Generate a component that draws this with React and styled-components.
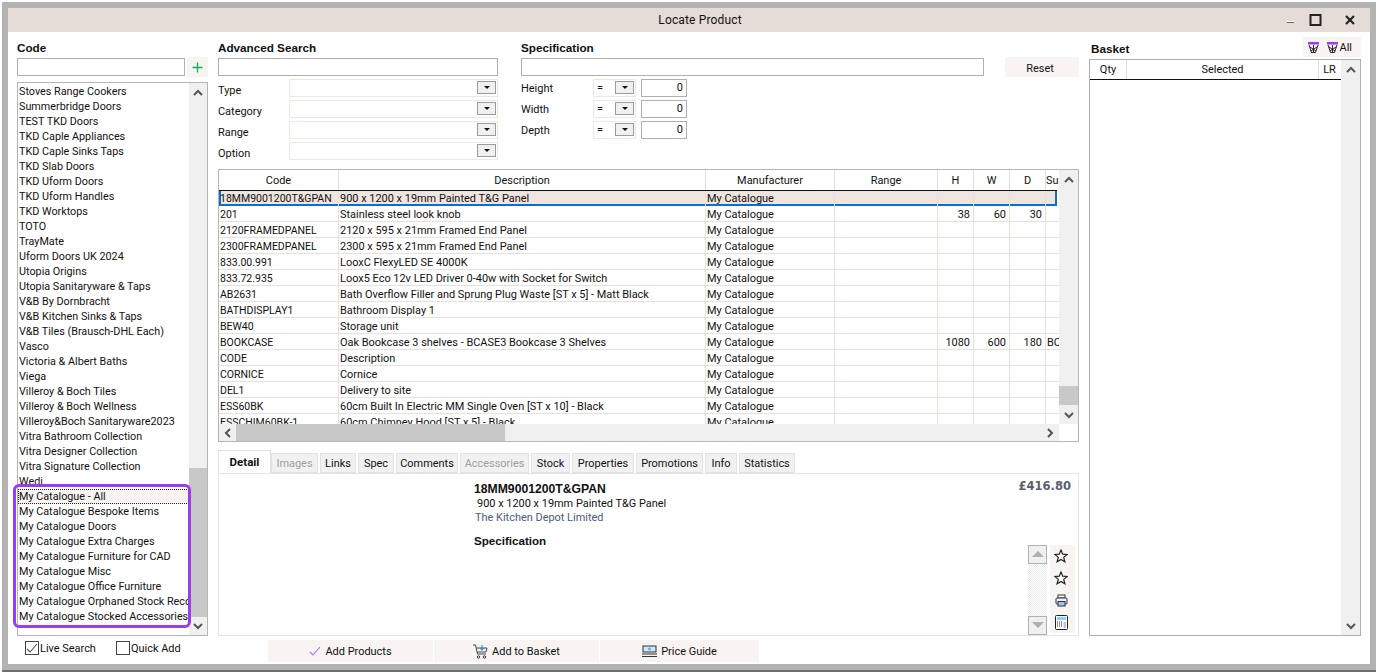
import React from "react";
import styled, { createGlobalStyle } from "styled-components";

const Global = createGlobalStyle`
  html, body { margin: 0; padding: 0; background: #fff; }
  body { font-family: Roboto, "Liberation Sans", Arial, sans-serif; font-size: 10.95px; color: #111; }
  * { box-sizing: border-box; }
`;

const Page = styled.div`
  width: 1378px; height: 672px; padding: 2px 2px 0; background: #fff; overflow: hidden;
`;
const Win = styled.div`
  width: 1374px; height: 668px; border: 6px solid #b3b3b3;
  display: flex; flex-direction: column; background: #fff;
  box-shadow: 0 2px 0 #6e6e6e;
`;
const TitleBar = styled.div`
  height: 24px; flex: none; background: #e5dcd7; display: flex; align-items: center; justify-content: center;
  position: relative; font-size: 12px; letter-spacing: .15px; padding-left: 22px;
`;
const WinCtl = styled.div`
  position: absolute; top: 0; right: 0; height: 24px; display: flex; align-items: center;
`;
const Content = styled.div`
  flex: 1; display: grid; grid-template-columns: 191px 861px 272px; column-gap: 10px;
  padding: 8px 9px 0 9px; position: relative;
`;
const Col = styled.div`display: flex; flex-direction: column; min-width: 0;`;
const SpecCol = styled(Col)`grid-column: 2 / span 2;`;
const H = styled.div`
  font-family: "Liberation Sans", Arial, sans-serif; font-weight: 700; font-size: 11.7px; height: 18px; line-height: 15px;
`;
const Input = styled.div`
  height: 18px; border: 1px solid #b0b0b0; background: #fff; width: ${p => p.$w || "100%"}; flex: none;
`;
const CodeRow = styled.div`display: flex; align-items: center; height: 18px;`;
const PlusBtn = styled.div`
  width: 21px; height: 20px; margin-left: 2px; background: #f7f4f1; display: flex; align-items: center; justify-content: center; flex: none;
`;
const ListBox = styled.div`
  margin-top: 6px; height: 554px; border: 1px solid #b5b5b5; display: flex; position: relative;
`;
const ListItems = styled.div`
  flex: 1; padding: 1px 0 0 0; overflow: hidden; min-width: 0;
`;
const Item = styled.div`
  height: 15px; line-height: 16px; white-space: nowrap; overflow: hidden; padding-left: 1px; font-size: 10.8px;
  ${p => p.$focus && `outline: 1px dotted #222; outline-offset: -1px; background: #f7f4f1;`}
`;
const VBar = styled.div`
  width: ${p => p.$w || 18}px; flex: none; background: #f0f0f0; display: flex; flex-direction: column; position: relative;
`;
const Thumb = styled.div`
  position: absolute; left: 0; right: 0; top: ${p => p.$top}px; height: ${p => p.$h}px; background: #c8c8c8;
`;
const Arrow = styled.div`
  position: absolute; left: 0; right: 0; height: 18px; display: flex; align-items: center; justify-content: center;
  ${p => p.$up ? "top: 0;" : "bottom: 0;"}
`;
const Highlight = styled.div`
  position: absolute; left: -5px; top: 401px; width: 178px; height: 144px; border: 3px solid #9b3cf0; border-radius: 6px; pointer-events: none;
`;
const Filters = styled.div`display: grid; grid-template-columns: 280px 1fr 95px; column-gap: 23px;`;
const FormGrid = styled.div`display: flex; flex-direction: column; margin-top: 1px;`;
const FRow = styled.div`display: flex; align-items: center; height: 21px;`;
const FLabel = styled.div`width: ${p => p.$w}px; flex: none; padding-top: ${p => p.$pad || 0}px;`;
const Combo = styled.div`
  width: ${p => p.$w}px; height: 18px; border: 1px solid #efe7e2; display: flex; align-items: center; justify-content: ${p => p.$val ? "space-between" : "flex-end"};
  padding: 0 1px 0 ${p => p.$val ? 3 : 0}px;
`;
const Drop = styled.div`
  width: 19px; height: 13px; border: 1px solid #9c9c9c; background: #f0f0f0; display: flex; align-items: center; justify-content: center;
  &::after { content: ""; border: 3px solid transparent; border-top: 3.5px solid #111; border-bottom: 0; }
`;
const NumBox = styled.div`
  width: 46px; height: 18px; border: 1px solid #b0b0b0; margin-left: 5px; text-align: right; padding-right: 3px; line-height: 16px;
`;
const ResetBtn = styled.div`
  width: 74px; height: 20px; margin: -1px 0 -1px 21px; background: #f7f4f1; text-align: center; line-height: 23px; flex: none; padding-right: 4px;
`;
const SpecInput = styled.div`display: flex; align-items: center; height: 18px;`;
const Grid = styled.div`
  margin-top: 8px; height: 273px; border: 1px solid #b5b5b5; display: flex; flex-direction: column; background: #fff;
`;
const GridMain = styled.div`flex: 1; display: flex; min-height: 0;`;
const Table = styled.div`flex: 1; min-width: 0; overflow: hidden;`;
const TCols = "120px 367px 129px 103px 36px 36px 36px 14px";
const HeadRow = styled.div`
  display: grid; grid-template-columns: ${TCols}; height: 20px; align-items: center; text-align: center;
`;
const HeadCell = styled.div`
  height: 20px; line-height: 22px; border-right: 1px solid #e4dcd7; white-space: nowrap; overflow: hidden;
  &:last-child { border-right: 0; text-align: left; }
`;
const DataRow = styled.div`
  display: grid; grid-template-columns: ${TCols}; height: 16px; line-height: 17px; border-bottom: 1px solid #eadfd9;
  ${p => p.$sel && `
    width: 838px; background: #eee5e0; border-top: 1px solid #111; border-bottom: 0; line-height: 16px;
    box-shadow: inset 2px 0 0 #0a6fd0, inset -2px 0 0 #0a6fd0, inset 0 -2px 0 #0a6fd0;
  `}
`;
const Cell = styled.div`
  border-right: 1px solid #eadfd9; padding: 0 ${p => p.$num ? "3px" : "1px"}; white-space: nowrap; overflow: hidden;
  text-align: ${p => p.$num ? "right" : "left"};
  font-size: ${p => p.$code ? "10.5px" : "inherit"};
  &:last-child { border-right: 0; }
`;
const HBar = styled.div`
  height: 17px; flex: none; background: #f0f0f0; position: relative; display: flex; align-items: center; justify-content: space-between;
  margin-right: 19px; padding: 0 5px;
  & > svg { position: relative; }
`;
const HThumb = styled.div`
  position: absolute; left: 17px; width: 269px; top: 0; bottom: 0; background: #c8c8c8;
`;
const Tabs = styled.div`display: flex; align-items: flex-end; margin-top: 8px; height: 23px; gap: 2px;`;
const Tab = styled.div`
  width: ${p => p.$w}px; height: ${p => p.$active ? 23 : 20}px; text-align: center; line-height: ${p => p.$active ? 23 : 19}px;
  background: ${p => p.$active ? "#fff" : "#f1f1f1"}; color: ${p => p.$off ? "#a0a0a0" : "#111"};
  border: 1px solid #e2e2e2; border-bottom: ${p => p.$active ? "0" : "1px solid #e2e2e2"}; font-weight: ${p => p.$active ? 700 : 400};
  font-size: ${p => p.$active ? "11.5px" : "inherit"};
  margin-right: ${p => p.$active ? -2 : 0}px; position: relative; z-index: ${p => p.$active ? 1 : 0};
`;
const Detail = styled.div`
  height: 163px; border: 1px solid #e4e4e4; position: relative; padding: 7px 7px 0 255px; display: flex; justify-content: space-between;
`;
const DCode = styled.div`font-weight: 700; font-family: "Liberation Sans", Arial, sans-serif; font-size: 12.2px; line-height: 16px;`;
const DDesc = styled.div`padding-left: 3px; line-height: 14px;`;
const DCo = styled.div`padding-left: 1px; color: #4b5a80; line-height: 14px;`;
const DSpec = styled.div`font-family: "Liberation Sans", Arial, sans-serif; font-size: 11.6px; font-weight: 700; margin-top: 8px; line-height: 16px;`;
const Price = styled.div`font-weight: 700; font-family: "DejaVu Sans", sans-serif; font-size: 11.5px; color: #5a5e6c; line-height: 14px; margin-top: -2px;`;
const SideTools = styled.div`
  position: absolute; right: 3px; top: 71px; display: flex; gap: 3px; align-items: flex-start;
`;
const MiniScroll = styled.div`
  width: 19px; height: 90px; display: flex; flex-direction: column; justify-content: space-between;
  background: repeating-conic-gradient(#ececec 0 25%, #fff 0 50%) 0 0 / 2px 2px;
`;
const MiniBtn = styled.div`
  height: 19px; border: 1px solid #b0b0b0; background: #f0f0f0; display: flex; align-items: center; justify-content: center;
`;
const IconStack = styled.div`
  width: 25px; height: 88px; background: #f7f4f1; display: flex; flex-direction: column; align-items: center;
`;
const IconSlot = styled.div`height: 22px; display: flex; align-items: center; justify-content: center; margin-left: -3px;`;
const CheckRow = styled.div`display: flex; align-items: center; margin-top: 4px; height: 16px; padding-left: 8px;`;
const Check = styled.div`
  width: 14px; height: 14px; border: 1px solid #444; display: flex; align-items: center; justify-content: center; background: #fff; flex: none;
`;
const CheckLabel = styled.label`
  display: flex; align-items: center; gap: 1px; width: ${p => p.$w}px; flex: none;
`;
const Actions = styled.div`display: flex; gap: 1px; margin: 4px 0 0 50px;`;
const Action = styled.div`
  width: ${p => p.$w}px; height: 22px; background: #f7f4f1; display: flex; align-items: center; justify-content: center; gap: 4px;
`;
const BasketHead = styled.div`display: flex; justify-content: space-between; align-items: flex-end; height: 19px;`;
const BasketLabel = styled.div`
  font-family: "Liberation Sans", Arial, sans-serif; font-size: 11.7px; font-weight: 700; line-height: 15px; padding-left: 2px; margin-bottom: 3px;
`;
const BasketTools = styled.div`
  width: 58px; height: 20px; margin-bottom: 2px; background: #f7f4f1; display: flex; align-items: center; justify-content: flex-end; padding-right: 9px; gap: 8px;
`;
const AllLabel = styled.span`margin-left: -6px;`;
const BasketGrid = styled.div`
  height: 577px; border: 1px solid #b0b0b0; display: flex;
`;
const BasketBody = styled.div`flex: 1;`;
const BasketHeadRow = styled.div`
  display: grid; grid-template-columns: 37px 192px 21px; height: 20px; border-bottom: 1px solid #111; text-align: center; line-height: 19px;
`;
const BasketHeadCell = styled.div`
  border-right: 1px solid #e4dcd7;
  &:last-child { border-right: 0; }
`;

const Up = ({ c = "#555" }) => <svg width="10" height="7" viewBox="0 0 10 7"><path d="M1 6 L5 2 L9 6" fill="none" stroke={c} strokeWidth="2" /></svg>;
const Down = ({ c = "#555" }) => <svg width="10" height="7" viewBox="0 0 10 7"><path d="M1 1 L5 5 L9 1" fill="none" stroke={c} strokeWidth="2" /></svg>;
const Left = () => <svg width="7" height="10" viewBox="0 0 7 10"><path d="M6 1 L2 5 L6 9" fill="none" stroke="#555" strokeWidth="2" /></svg>;
const Right = () => <svg width="7" height="10" viewBox="0 0 7 10"><path d="M1 1 L5 5 L1 9" fill="none" stroke="#555" strokeWidth="2" /></svg>;
const Star = () => <svg width="14" height="14" viewBox="0 0 14 14"><path d="M7 1 L8.7 5.2 L13.2 5.5 L9.7 8.4 L10.9 12.8 L7 10.4 L3.1 12.8 L4.3 8.4 L0.8 5.5 L5.3 5.2 Z" fill="#fff" stroke="#222" strokeWidth="1.2" /></svg>;
const Printer = () => <svg width="13" height="13" viewBox="0 0 13 13"><rect x="3" y="1" width="7" height="3" fill="#fff" stroke="#333" /><rect x="1" y="4" width="11" height="6" rx="1" fill="#eef" stroke="#333" /><rect x="3" y="7.5" width="7" height="4.5" fill="#9cc7ef" stroke="#333" /></svg>;
const Calc = () => <svg width="13" height="15" viewBox="0 0 13 15"><rect x=".5" y=".5" width="12" height="14" rx="1" fill="#fff" stroke="#222" /><rect x="2" y="2" width="9" height="3" fill="#7fd6fb" /><path d="M2 7h1M4 7h1M6 7h1M2 9h1M4 9h1M6 9h1M2 11h1M4 11h1M6 11h1" stroke="#222" /><rect x="8.5" y="7" width="2.5" height="6" fill="#c9b9f2" /></svg>;
const Hoop = () => <svg width="11" height="11" viewBox="0 0 11 11"><rect x="0" y="0" width="11" height="2.5" fill="#9b3cf0" /><path d="M1 3 L3.5 10.5 H7.5 L10 3 M2 5 L8 9 M9 5 L3 9 M5.5 3V10.5" fill="none" stroke="#111" strokeWidth=".9" /></svg>;
const Tick = ({ c = "#b070f0", s = 12 }) => <svg width={s} height={s} viewBox="0 0 12 12"><path d="M1 7 L4 10 L11 2" fill="none" stroke={c} strokeWidth="1.1" /></svg>;
const Cart = () => <svg width="15" height="15" viewBox="0 0 15 15"><path d="M0 1 H2.5 L4.5 10 H13 M3.5 4 H14 L13 8 H4.3" fill="none" stroke="#333" strokeWidth=".9" /><path d="M9 1 V6 M7 4 L9 6.3 L11 4" fill="none" stroke="#2b7fd4" strokeWidth="1" /><circle cx="5.5" cy="13" r="1.2" fill="none" stroke="#333" /><circle cx="11.5" cy="13" r="1.2" fill="none" stroke="#333" /></svg>;
const Money = () => <svg width="15" height="13" viewBox="0 0 15 13"><rect x="1" y="1" width="13" height="6" fill="#cfe8f7" stroke="#333" /><circle cx="7.5" cy="4" r="1.4" fill="#6aa8d8" /><path d="M0 9 H15 M0 11.5 H15" stroke="#333" /></svg>;

const brands = ["Stoves Range Cookers","Summerbridge Doors","TEST TKD Doors","TKD Caple Appliances","TKD Caple Sinks Taps","TKD Slab Doors","TKD Uform Doors","TKD Uform Handles","TKD Worktops","TOTO","TrayMate","Uform Doors UK 2024","Utopia Origins","Utopia Sanitaryware & Taps","V&B By Dornbracht","V&B Kitchen Sinks & Taps","V&B Tiles (Brausch-DHL Each)","Vasco","Victoria & Albert Baths","Viega","Villeroy & Boch Tiles","Villeroy & Boch Wellness","Villeroy&Boch Sanitaryware2023","Vitra Bathroom Collection","Vitra Designer Collection","Vitra Signature Collection","Wedi","My Catalogue - All","My Catalogue Bespoke Items","My Catalogue Doors","My Catalogue Extra Charges","My Catalogue Furniture for CAD","My Catalogue Misc","My Catalogue Office Furniture","My Catalogue Orphaned Stock Records","My Catalogue Stocked Accessories"];

const rows = [
  ["18MM9001200T&GPAN","900 x 1200 x 19mm Painted T&G Panel","","","",""],
  ["201","Stainless steel look knob","38","60","30",""],
  ["2120FRAMEDPANEL","2120 x 595 x 21mm Framed End Panel","","","",""],
  ["2300FRAMEDPANEL","2300 x 595 x 21mm Framed End Panel","","","",""],
  ["833.00.991","LooxC FlexyLED SE 4000K","","","",""],
  ["833.72.935","Loox5 Eco 12v LED Driver 0-40w with Socket for Switch","","","",""],
  ["AB2631","Bath Overflow Filler and Sprung Plug Waste [ST x 5] - Matt Black","","","",""],
  ["BATHDISPLAY1","Bathroom Display 1","","","",""],
  ["BEW40","Storage unit","","","",""],
  ["BOOKCASE","Oak Bookcase 3 shelves - BCASE3 Bookcase 3 Shelves","1080","600","180","BC"],
  ["CODE","Description","","","",""],
  ["CORNICE","Cornice","","","",""],
  ["DEL1","Delivery to site","","","",""],
  ["ESS60BK","60cm Built In Electric MM Single Oven [ST x 10] - Black","","","",""],
  ["ESSCHIM60BK-1","60cm Chimney Hood [ST x 5] - Black","","","",""],
];

const tabs = [["Detail",53],["Images",47,1],["Links",36],["Spec",36],["Comments",62],["Accessories",69,1],["Stock",39],["Properties",62],["Promotions",67],["Info",32],["Statistics",56]];

export default function App() {
  return (
    <Page>
      <Global />
      <Win>
        <TitleBar>
          Locate Product
          <WinCtl>
            <svg width="90" height="24" viewBox="0 0 90 24"><rect x="7" y="13" width="7" height="2" fill="#fff" /><rect x="7" y="14" width="7" height="1" fill="#666" /><rect x="30.5" y="7" width="10" height="10" fill="none" stroke="#222" strokeWidth="2" /><path d="M66 8 L74 16 M74 8 L66 16" stroke="#222" strokeWidth="2.2" /></svg>
          </WinCtl>
        </TitleBar>
        <Content>
          <Col>
            <H>Code</H>
            <CodeRow>
              <Input $w="168px" />
              <PlusBtn><svg width="11" height="11" viewBox="0 0 11 11"><path d="M5.5 0.5 V10.5 M0.5 5.5 H10.5" stroke="#12b048" strokeWidth="1.3" /></svg></PlusBtn>
            </CodeRow>
            <ListBox>
              <ListItems>
                {brands.map((b, i) => <Item key={b} $focus={i === 27}>{b}</Item>)}
              </ListItems>
              <VBar>
                <Thumb $top={385} $h={149} />
                <Arrow $up><Up /></Arrow>
                <Arrow><Down /></Arrow>
              </VBar>
              <Highlight />
            </ListBox>
            <CheckRow>
              <CheckLabel $w={91}><Check><Tick c="#555" s={12} /></Check>Live Search</CheckLabel>
              <CheckLabel $w={80}><Check />Quick Add</CheckLabel>
            </CheckRow>
          </Col>

          <Col>
            <Filters>
              <Col>
                <H>Advanced Search</H>
                <Input />
                <FormGrid>
                  {["Type","Category","Range","Option"].map(l => (
                    <FRow key={l}><FLabel $w={71} $pad={5}>{l}</FLabel><Combo $w={209}><Drop /></Combo></FRow>
                  ))}
                </FormGrid>
              </Col>
              <SpecCol>
                <H>Specification</H>
                <SpecInput>
                  <Input $w="463px" />
                  <ResetBtn>Reset</ResetBtn>
                </SpecInput>
                <FormGrid>
                  {["Height","Width","Depth"].map(l => (
                    <FRow key={l}><FLabel $w={72} $pad={2}>{l}</FLabel><Combo $w={43} $val>=<Drop /></Combo><NumBox>0</NumBox></FRow>
                  ))}
                </FormGrid>
              </SpecCol>
            </Filters>
            <Grid>
              <GridMain>
                <Table>
                  <HeadRow>
                    {["Code","Description","Manufacturer","Range","H","W","D","Su"].map(h => <HeadCell key={h}>{h}</HeadCell>)}
                  </HeadRow>
                  {rows.map((r, i) => (
                    <DataRow key={r[0]} $sel={i === 0}>
                      <Cell $code>{r[0]}</Cell>
                      <Cell>{r[1]}</Cell>
                      <Cell>My Catalogue</Cell>
                      <Cell />
                      <Cell $num>{r[2]}</Cell>
                      <Cell $num>{r[3]}</Cell>
                      <Cell $num>{r[4]}</Cell>
                      <Cell>{r[5]}</Cell>
                    </DataRow>
                  ))}
                </Table>
                <VBar $w={19}>
                  <Thumb $top={216} $h={19} />
                  <Arrow $up><Up /></Arrow>
                  <Arrow><Down /></Arrow>
                </VBar>
              </GridMain>
              <HBar>
                <HThumb />
                <Left /><Right />
              </HBar>
            </Grid>
            <Tabs>
              {tabs.map(([t, w, off], i) => <Tab key={t} $w={w} $off={off} $active={i === 0}>{t}</Tab>)}
            </Tabs>
            <Detail>
              <div>
                <DCode>18MM9001200T&amp;GPAN</DCode>
                <DDesc>900 x 1200 x 19mm Painted T&amp;G Panel</DDesc>
                <DCo>The Kitchen Depot Limited</DCo>
                <DSpec>Specification</DSpec>
              </div>
              <Price>£416.80</Price>
              <SideTools>
                <MiniScroll>
                  <MiniBtn><svg width="12" height="7" viewBox="0 0 12 7"><path d="M6 0 L12 6 H0 Z" fill="#b0b0b0" /></svg></MiniBtn>
                  <MiniBtn><svg width="12" height="7" viewBox="0 0 12 7"><path d="M0 0 H12 L6 6 Z" fill="#b0b0b0" /></svg></MiniBtn>
                </MiniScroll>
                <IconStack>
                  <IconSlot><Star /></IconSlot>
                  <IconSlot><Star /></IconSlot>
                  <IconSlot><Printer /></IconSlot>
                  <IconSlot><Calc /></IconSlot>
                </IconStack>
              </SideTools>
            </Detail>
            <Actions>
              <Action $w={165}><Tick />Add Products</Action>
              <Action $w={165}><Cart />Add to Basket</Action>
              <Action $w={159}><Money />Price Guide</Action>
            </Actions>
          </Col>

          <Col>
            <BasketHead>
              <BasketLabel>Basket</BasketLabel>
              <BasketTools><Hoop /><Hoop /><AllLabel>All</AllLabel></BasketTools>
            </BasketHead>
            <BasketGrid>
              <BasketBody>
                <BasketHeadRow>
                  <BasketHeadCell>Qty</BasketHeadCell>
                  <BasketHeadCell>Selected</BasketHeadCell>
                  <BasketHeadCell>LR</BasketHeadCell>
                </BasketHeadRow>
              </BasketBody>
              <VBar $w={19}>
                <Arrow $up><Up /></Arrow>
                <Arrow><Down /></Arrow>
              </VBar>
            </BasketGrid>
          </Col>
        </Content>
      </Win>
    </Page>
  );
}
